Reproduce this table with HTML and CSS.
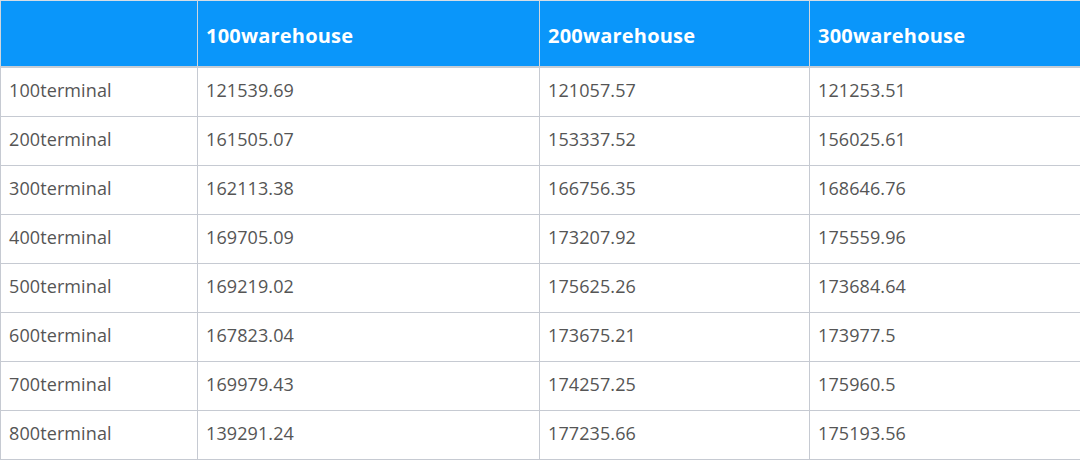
FILE: index.html
```html
<!DOCTYPE html>
<html>
<head>
<meta charset="utf-8">
<link rel="stylesheet" href="styles.css">
</head>
<body>
<table class="grid">
  <colgroup>
    <col class="c1"><col class="c2"><col class="c3"><col class="c4">
  </colgroup>
  <thead>
    <tr><th></th><th>100warehouse</th><th>200warehouse</th><th>300warehouse</th></tr>
  </thead>
  <tbody>
    <tr><td>100terminal</td><td>121539.69</td><td>121057.57</td><td>121253.51</td></tr>
    <tr><td>200terminal</td><td>161505.07</td><td>153337.52</td><td>156025.61</td></tr>
    <tr><td>300terminal</td><td>162113.38</td><td>166756.35</td><td>168646.76</td></tr>
    <tr><td>400terminal</td><td>169705.09</td><td>173207.92</td><td>175559.96</td></tr>
    <tr><td>500terminal</td><td>169219.02</td><td>175625.26</td><td>173684.64</td></tr>
    <tr><td>600terminal</td><td>167823.04</td><td>173675.21</td><td>173977.5</td></tr>
    <tr><td>700terminal</td><td>169979.43</td><td>174257.25</td><td>175960.5</td></tr>
    <tr><td>800terminal</td><td>139291.24</td><td>177235.66</td><td>175193.56</td></tr>
  </tbody>
</table>
</body>
</html>
```
FILE: styles.css
```css
html, body {
  margin: 0;
  padding: 0;
  background: #ffffff;
}
.grid {
  width: 1080px;
  border-collapse: collapse;
  table-layout: fixed;
  font-family: "Open Sans", "Liberation Sans", sans-serif;
}
.c1 { width: 197px; }
.c2 { width: 342px; }
.c3 { width: 270px; }
.c4 { width: 271px; }
.grid th {
  height: 61px;
  background: #0a96fa;
  color: #ffffff;
  font-size: 20px;
  font-weight: 700;
  text-align: left;
  padding: 4px 0 0 8px;
  border: 1px solid #cfd6de;
  border-top-color: #d5dde6;
  border-bottom: 2px solid #c6cdd6;
  letter-spacing: 0.2px;
}
.grid th + th {
  border-left: 1px solid #8cc6f2;
}
.grid td {
  height: 43px;
  padding: 0 0 5px 8px;
  font-size: 18px;
  font-weight: 400;
  color: #555555;
  border: 1.5px solid #c6cad2;
  letter-spacing: 0.1px;
}
```
